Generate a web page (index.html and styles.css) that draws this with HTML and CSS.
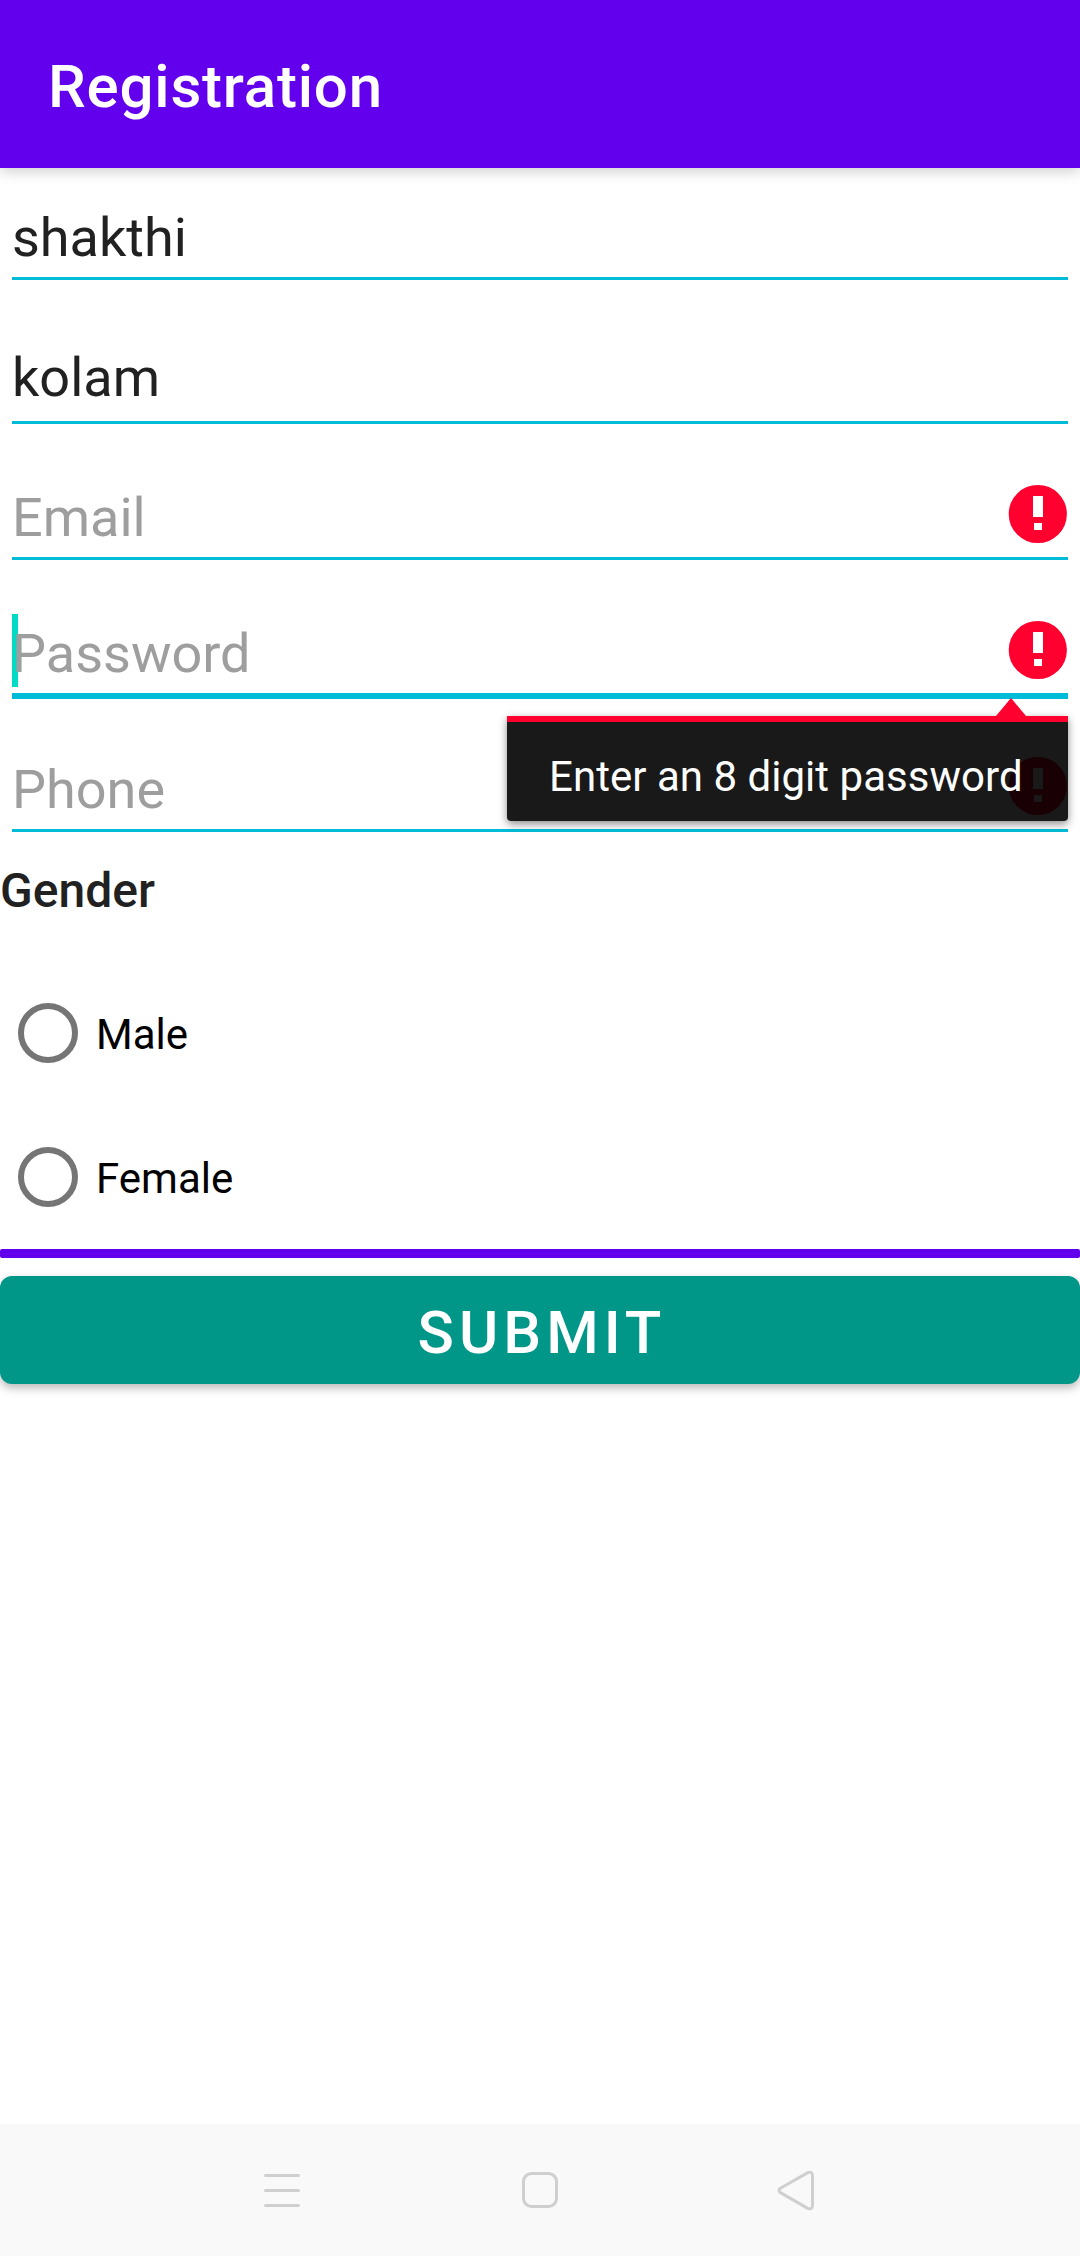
FILE: index.html
```html
<!DOCTYPE html>
<html lang="en">
<head>
<meta charset="utf-8">
<title>Registration</title>
<link rel="stylesheet" href="styles.css">
</head>
<body>
<svg class="defs" aria-hidden="true">
  <symbol id="error" viewBox="0 0 60 60">
    <circle cx="29.8" cy="30" r="29.1" fill="#ff002f"/>
    <path d="M25 12h10v21H25zM26 39h8v7h-8z" fill="#fff"/>
  </symbol>
</svg>
<div class="screen">
  <header class="app-bar"><h1 class="title">Registration</h1></header>
  <main class="form">
    <div class="field first-name"><span class="value">shakthi</span></div>
    <div class="field last-name"><span class="value">kolam</span></div>
    <div class="field"><span class="hint">Email</span><svg class="error-icon"><use href="#error"/></svg></div>
    <div class="field focused">
      <i class="cursor"></i>
      <span class="hint">Password</span><svg class="error-icon"><use href="#error"/></svg>
      <div class="popup">
        <svg class="arrow" viewBox="0 0 30 18"><path d="M15 0L30 18H0z" fill="#ff002f"/></svg>
        <span class="popup-text">Enter an 8 digit password</span>
      </div>
    </div>
    <div class="field"><span class="hint">Phone</span><svg class="error-icon"><use href="#error"/></svg></div>
    <h2 class="group-label">Gender</h2>
    <div class="radios">
      <label class="radio"><i class="ring"></i><span>Male</span></label>
      <label class="radio"><i class="ring"></i><span>Female</span></label>
    </div>
    <div class="divider"></div>
    <button class="submit">SUBMIT</button>
  </main>
  <nav class="nav-bar">
    <svg class="nav-icon" viewBox="0 0 44 44"><path d="M5.500 7.500h33M5.500 22.500h33M5.500 37.500h33"/></svg>
    <svg class="nav-icon" viewBox="0 0 44 44"><rect x="5.500" y="5.500" width="33" height="33" rx="8"/></svg>
    <svg class="nav-icon" viewBox="0 0 44 44"><path d="M31.800 4.600L4.400 20.200Q1.600 22.400 4.400 24.600L31.800 40.400Q36.500 42 36.500 37V8Q36.500 3 31.800 4.600z"/></svg>
  </nav>
</div>
</body>
</html>
```
FILE: styles.css
```css
* { box-sizing: border-box; }
body { margin: 0; background: #fff; font-family: Roboto, sans-serif; }
.defs { position: absolute; width: 0; height: 0; }
.screen { display: flex; flex-direction: column; height: 2256px; }
.app-bar {
  display: flex;
  align-items: center;
  height: 168px;
  padding: 6px 48px 0;
  background: #6200ee;
  box-shadow: 0 4px 12px rgba(0, 0, 0, .18);
}
.title { margin: 0; color: #fff; font-size: 60px; line-height: 70px; font-weight: 500; letter-spacing: .8px; }
.form { flex: 1; display: flex; flex-direction: column; }
.field {
  position: relative;
  display: flex;
  align-items: flex-end;
  justify-content: space-between;
  height: 136px;
  margin: 0 12px;
  border-bottom: 3px solid #00bcd7;
  font-size: 54px;
  line-height: 64px;
}
.first-name { height: 112px; padding-bottom: 7px; }
.last-name { height: 144px; padding-bottom: 11px; }
.field .value { color: #212121; }
.field .hint { padding-bottom: 7px; color: #9e9e9e; }
.error-icon { width: 60px; height: 60px; margin-bottom: 13px; }
.focused { height: 139px; margin-bottom: -3px; border-bottom-width: 6px; }
.cursor { position: absolute; left: 0; top: 54px; width: 6px; height: 73px; background: #03dac5; }
.focused .hint { position: relative; }
.popup {
  position: absolute;
  z-index: 2;
  top: 156px;
  right: 0;
  width: 561px;
  height: 105px;
  padding: 30px 0 0 42px;
  border-top: 6px solid #ff002f;
  border-radius: 0 0 4px 4px;
  background: rgba(0, 0, 0, .9);
  background-clip: padding-box;
  box-shadow: 0 3px 8px rgba(0, 0, 0, .45);
  color: #fff;
  font-size: 42px;
  line-height: 50px;
  letter-spacing: .03px;
  white-space: nowrap;
}
.arrow { position: absolute; top: -24px; right: 42px; width: 30px; height: 18px; }
.group-label { margin: 27px 0 0; color: #212121; font-size: 48px; line-height: 64px; font-weight: 500; }
.radios { display: flex; flex-direction: column; margin-top: 38px; }
.radio { display: flex; align-items: center; gap: 18px; height: 144px; padding-left: 18px; font-size: 42px; line-height: 50px; color: #000; }
.radio span { padding-top: 3px; }
.ring { width: 60px; height: 60px; border: 6px solid #757575; border-radius: 50%; }
.divider { height: 9px; border-radius: 2px; background: #6200ee; }
.submit {
  height: 108px;
  margin-top: 18px;
  padding: 5px 0 0 4px;
  border: 0;
  border-radius: 12px;
  background: #009688;
  box-shadow: 0 4px 10px rgba(0, 0, 0, .28);
  color: #fff;
  font: 500 60px/70px Roboto, sans-serif;
  letter-spacing: 5.05px;
}
.nav-bar { display: flex; justify-content: center; align-items: center; gap: 214px; height: 132px; background: #f9f9f9; }
.nav-icon { width: 44px; height: 44px; fill: none; stroke: #cfcfcf; stroke-width: 3; stroke-linejoin: round; stroke-linecap: round; }
```
